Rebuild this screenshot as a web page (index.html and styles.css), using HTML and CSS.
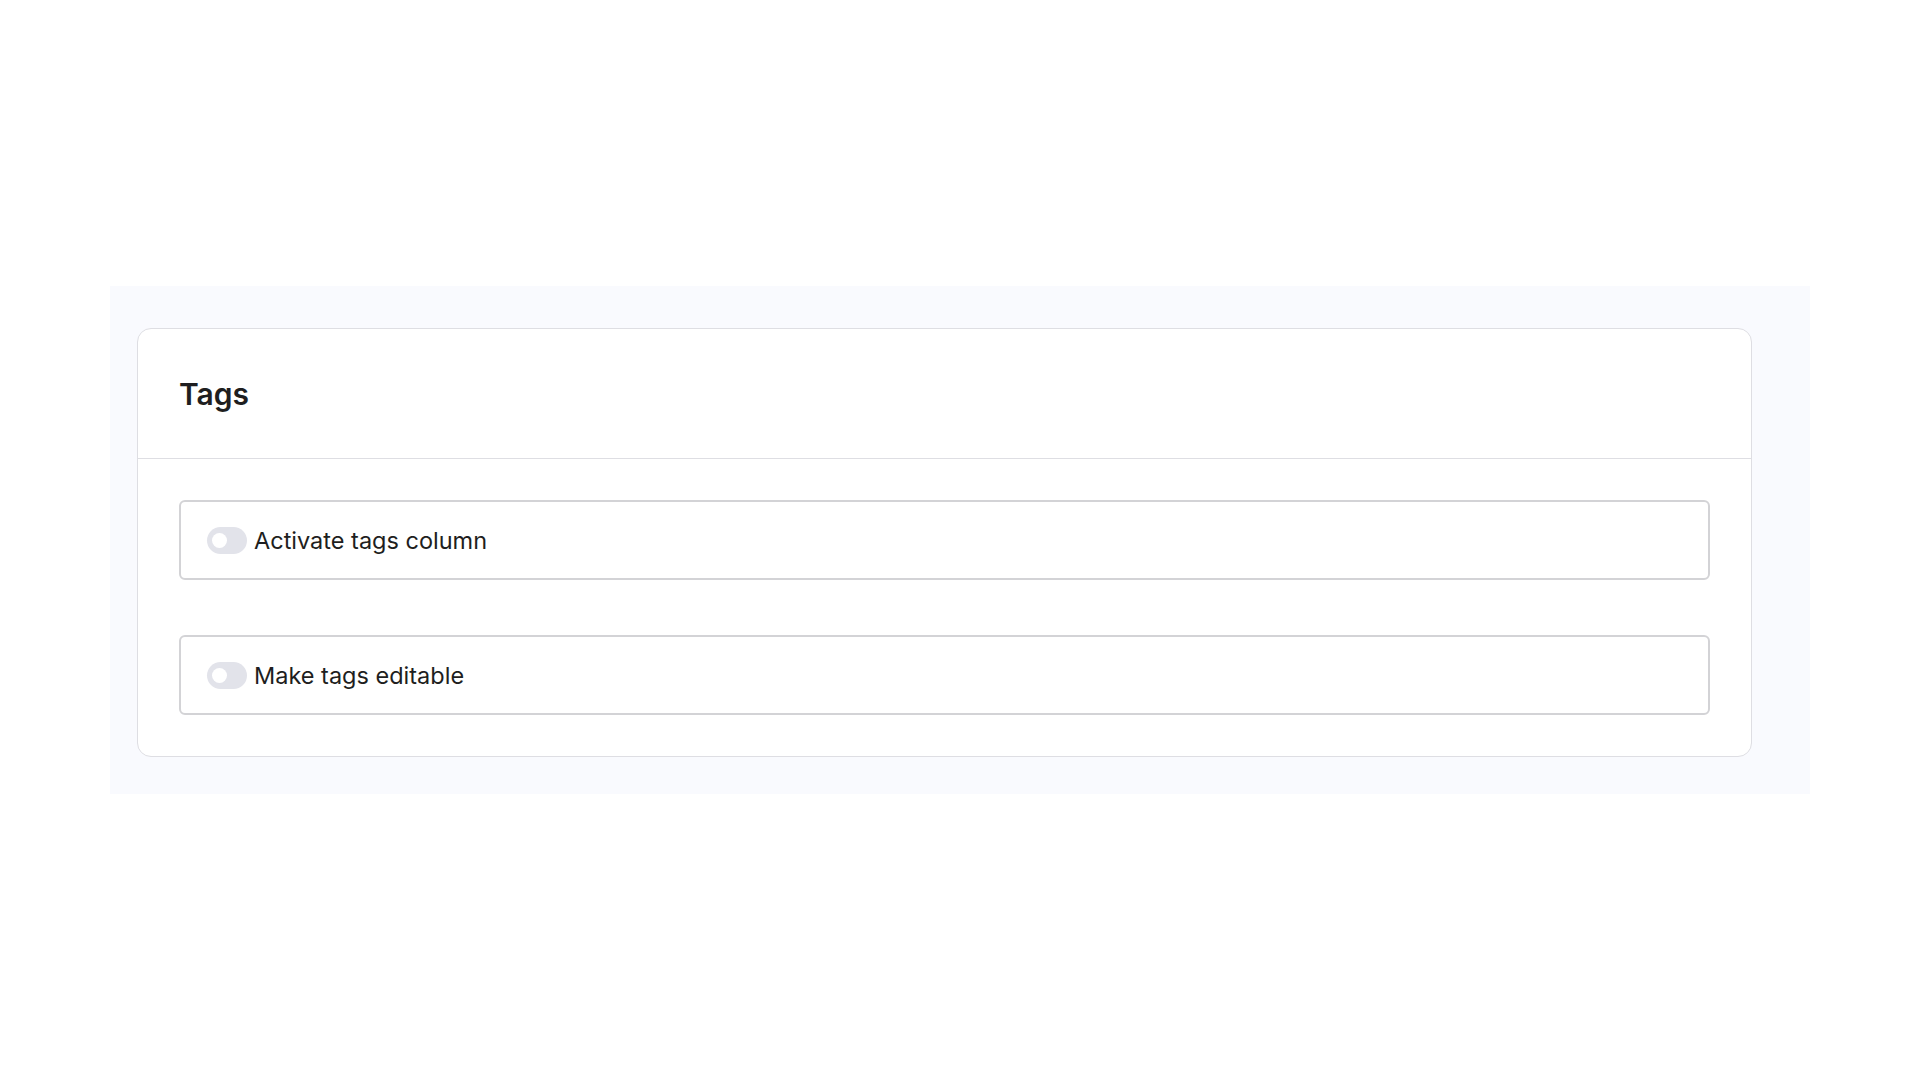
FILE: index.html
```html
<!DOCTYPE html>
<html lang="en">
<head>
    <meta charset="UTF-8">
    <meta name="viewport" content="width=device-width, initial-scale=1.0">
    <title>Tags settings</title>
<link rel="stylesheet" href="styles.css">
</head>
<body>

<main class="page">
    <section class="panel">
        <div class="card">
            <header class="card_head">
                <h2>Tags</h2>
            </header>
            <div class="card_body">
                <label class="opt">
                    <input type="checkbox" class="tgl_inp">
                    <span class="tgl"></span>
                    <span class="opt_txt">Activate tags column</span>
                </label>
                <label class="opt">
                    <input type="checkbox" class="tgl_inp">
                    <span class="tgl"></span>
                    <span class="opt_txt">Make tags editable</span>
                </label>
            </div>
        </div>
    </section>
</main>

</body>
</html>
```

FILE: styles.css
```css
body {
  margin: 0;
  background-color: #fff;
  font-family: 'Inter', 'Noto Sans', sans-serif;
  color: #1e1e20;
}

.page {
  padding: 286px 0 0 110px;
}

.panel {
  width: 1700px;
  box-sizing: border-box;
  padding: 42px 58px 37px 27px;
  background: #f9fafe;
}

.card {
  background: #fff;
  border: 1px solid #dedee3;
  border-radius: 14px;
}

.card_head {
  height: 129px;
  display: flex;
  align-items: center;
  padding: 0 42px 0 41px;
  border-bottom: 1px solid #dedee3;
}

.card_head h2 {
  margin: 0;
  font-size: 30px;
  font-weight: 600;
  letter-spacing: 0;
  padding-top: 1px;
}

.card_body {
  display: flex;
  flex-direction: column;
  gap: 55px;
  padding: 41px;
}

.opt {
  display: flex;
  align-items: center;
  gap: 7px;
  height: 76px;
  padding: 0 26px;
  border: 2px solid #d3d3d6;
  border-radius: 6px;
  cursor: pointer;
}

.tgl_inp {
  display: none;
}

.tgl {
  position: relative;
  width: 40px;
  height: 27px;
  border-radius: 14px;
  background: #e2e3ea;
  flex-shrink: 0;
  transition: all 0.3s ease-in-out;
}

.tgl::after {
  content: "";
  position: absolute;
  top: 6px;
  left: 5px;
  width: 15px;
  height: 15px;
  border-radius: 50%;
  background: #fff;
  transition: all 0.3s ease-in-out;
}

.tgl_inp:checked + .tgl {
  background: #1161ed;
}

.tgl_inp:checked + .tgl::after {
  left: 20px;
}

.opt_txt {
  font-size: 23.5px;
  color: #1e1e20;
}
```
